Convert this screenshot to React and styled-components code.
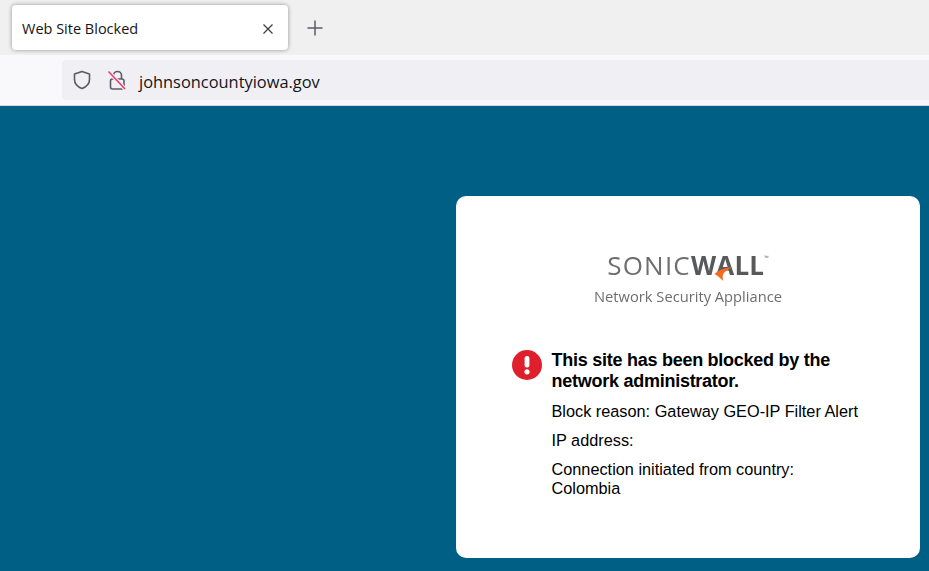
import React from "react"
import styled, { createGlobalStyle } from "styled-components"

const GlobalStyle = createGlobalStyle`
  html, body, #root {
    margin: 0;
    height: 100%;
    overflow: hidden;
  }
  body {
    background: #005f85;
    font-family: "Liberation Sans", Arial, sans-serif;
  }
`

const Page = styled.div`
  display: flex;
  flex-direction: column;
  width: 929px;
  height: 571px;
`

const TabStrip = styled.div`
  display: flex;
  align-items: flex-start;
  flex: 0 0 55px;
  box-sizing: border-box;
  padding: 5px 0 0 12px;
  background: #f0f0f0;
`

const Tab = styled.div`
  display: flex;
  align-items: center;
  justify-content: space-between;
  box-sizing: border-box;
  width: 276px;
  height: 45px;
  padding: 2px 14px 0 10px;
  background: #fff;
  border-radius: 4px;
  box-shadow: 0 0 4px rgba(0, 0, 0, 0.4);
`

const TabTitle = styled.span`
  font-family: "Open Sans", sans-serif;
  font-size: 14.5px;
  color: #15141a;
`

const IconButton = styled.span`
  display: flex;
  color: #5b5b66;
`

const NewTab = styled(IconButton)`
  margin: 15px 0 0 19px;
`

const LockSlot = styled(IconButton)`
  margin-left: 15px;
`

const NavBar = styled.div`
  display: flex;
  flex: 0 0 51px;
  box-sizing: border-box;
  padding: 5px 0 5px 62px;
  background: #f9f9fb;
  border-bottom: 1px solid #d5d5da;
`

const UrlBar = styled.div`
  display: flex;
  align-items: center;
  flex: 1;
  padding-left: 10px;
  background: #f0f0f4;
  border-radius: 4px 0 0 4px;
`

const UrlText = styled.span`
  margin: 2px 0 0 12px;
  font-family: "Open Sans", sans-serif;
  font-size: 16.4px;
  color: #15141a;
`

const Main = styled.main`
  display: flex;
  flex: 1;
  justify-content: flex-end;
  align-items: flex-start;
  padding: 90px 9px 0 0;
  background: #005f85;
`

const Card = styled.section`
  box-sizing: border-box;
  width: 464px;
  height: 362px;
  padding: 55px 56px 0;
  background: #fff;
  border-radius: 10px;
`

const Logo = styled.div`
  display: flex;
  flex-direction: column;
  align-items: center;
  filter: blur(0.45px);
`

const Wordmark = styled.div`
  position: relative;
  display: flex;
  font-family: "Open Sans", sans-serif;
  font-size: 26px;
  line-height: 29px;
  color: #6d6e70;
`

const Sonic = styled.span`
  font-weight: 400;
  letter-spacing: 1.2px;
`

const Wall = styled.span`
  font-weight: 700;
  letter-spacing: 0.2px;
  color: #58595b;
`

const TradeMark = styled.span`
  font-size: 6px;
  line-height: 14px;
  color: #6d6e70;
`

const Swoosh = styled.svg`
  position: absolute;
  left: 107px;
  top: 15px;
`

const Appliance = styled.div`
  margin-top: 6px;
  font-family: "Open Sans", sans-serif;
  font-size: 14.7px;
  color: #6d6e70;
`

const Message = styled.div`
  display: flex;
  gap: 9.5px;
  margin-top: 44px;
`

const AlertSvg = styled.svg`
  flex: 0 0 30px;
`

const Body = styled.div`
  display: flex;
  flex-direction: column;
  gap: 10px;
  color: #000;
  font-size: 16.3px;
  line-height: 19px;
`

const Heading = styled.h1`
  margin: 0;
  font-size: 18px;
  line-height: 21px;
  font-weight: 700;
  letter-spacing: -0.26px;
`

const Shield = () => (
  <svg width="20" height="20" viewBox="0 0 20 20" fill="none" stroke="#5b5b66" strokeWidth="1.6">
    <path d="M10 1.5 L17.5 4 V9.5 C17.5 14 14 17 10 18.5 C6 17 2.5 14 2.5 9.5 V4 Z" strokeLinejoin="round" />
  </svg>
)

const BrokenLock = () => (
  <svg width="20" height="22" viewBox="0 0 20 22" fill="none">
    <path d="M6.5 10 V6.5 a4 4 0 0 1 8 0 V10" stroke="#5b5b66" strokeWidth="1.6" />
    <rect x="3.5" y="10" width="13.5" height="10" rx="2" stroke="#5b5b66" strokeWidth="1.6" />
    <path d="M1.5 2.5 L18 20" stroke="#f0f0f4" strokeWidth="4" />
    <path d="M1.5 2.5 L18 20" stroke="#f0386b" strokeWidth="1.6" />
  </svg>
)

const AlertIcon = () => (
  <AlertSvg width="30" height="30" viewBox="0 0 30 30">
    <circle cx="15" cy="15" r="15" fill="#e01f2d" />
    <rect x="12.6" y="6" width="4.8" height="11.5" rx="2.2" fill="#fff" />
    <circle cx="15" cy="21.8" r="2.6" fill="#fff" />
  </AlertSvg>
)

export default function App() {
  return (
    <Page>
      <GlobalStyle />
      <TabStrip>
        <Tab>
          <TabTitle>Web Site Blocked</TabTitle>
          <IconButton>
            <svg width="12" height="12" viewBox="0 0 12 12" stroke="#3b3b42" strokeWidth="1.2">
              <path d="M1.5 1.5 L10.5 10.5 M10.5 1.5 L1.5 10.5" />
            </svg>
          </IconButton>
        </Tab>
        <NewTab>
          <svg width="16" height="16" viewBox="0 0 16 16" stroke="#5b5b66" strokeWidth="1.5">
            <path d="M8 0.5 V15.5 M0.5 8 H15.5" />
          </svg>
        </NewTab>
      </TabStrip>
      <NavBar>
        <UrlBar>
          <Shield />
          <LockSlot>
            <BrokenLock />
          </LockSlot>
          <UrlText>johnsoncountyiowa.gov</UrlText>
        </UrlBar>
      </NavBar>
      <Main>
        <Card>
          <Logo>
            <Wordmark>
              <Sonic>SONIC</Sonic>
              <Wall>WALL</Wall>
              <TradeMark>™</TradeMark>
              <Swoosh width="20" height="16" viewBox="0 0 20 16">
                <path d="M0.5 8 C5 3.5 12 1.5 19 1 C14 3 10.5 5.5 9 8.5 C8.5 10.5 8.5 13 9.5 15 C6.5 12.5 4 10 0.5 8 Z" fill="#f26b21" />
              </Swoosh>
            </Wordmark>
            <Appliance>Network Security Appliance</Appliance>
          </Logo>
          <Message>
            <AlertIcon />
            <Body>
              <Heading>This site has been blocked by the network administrator.</Heading>
              <div>Block reason: Gateway GEO-IP Filter Alert</div>
              <div>IP address:</div>
              <div>
                Connection initiated from country:
                <br />
                Colombia
              </div>
            </Body>
          </Message>
        </Card>
      </Main>
    </Page>
  )
}
